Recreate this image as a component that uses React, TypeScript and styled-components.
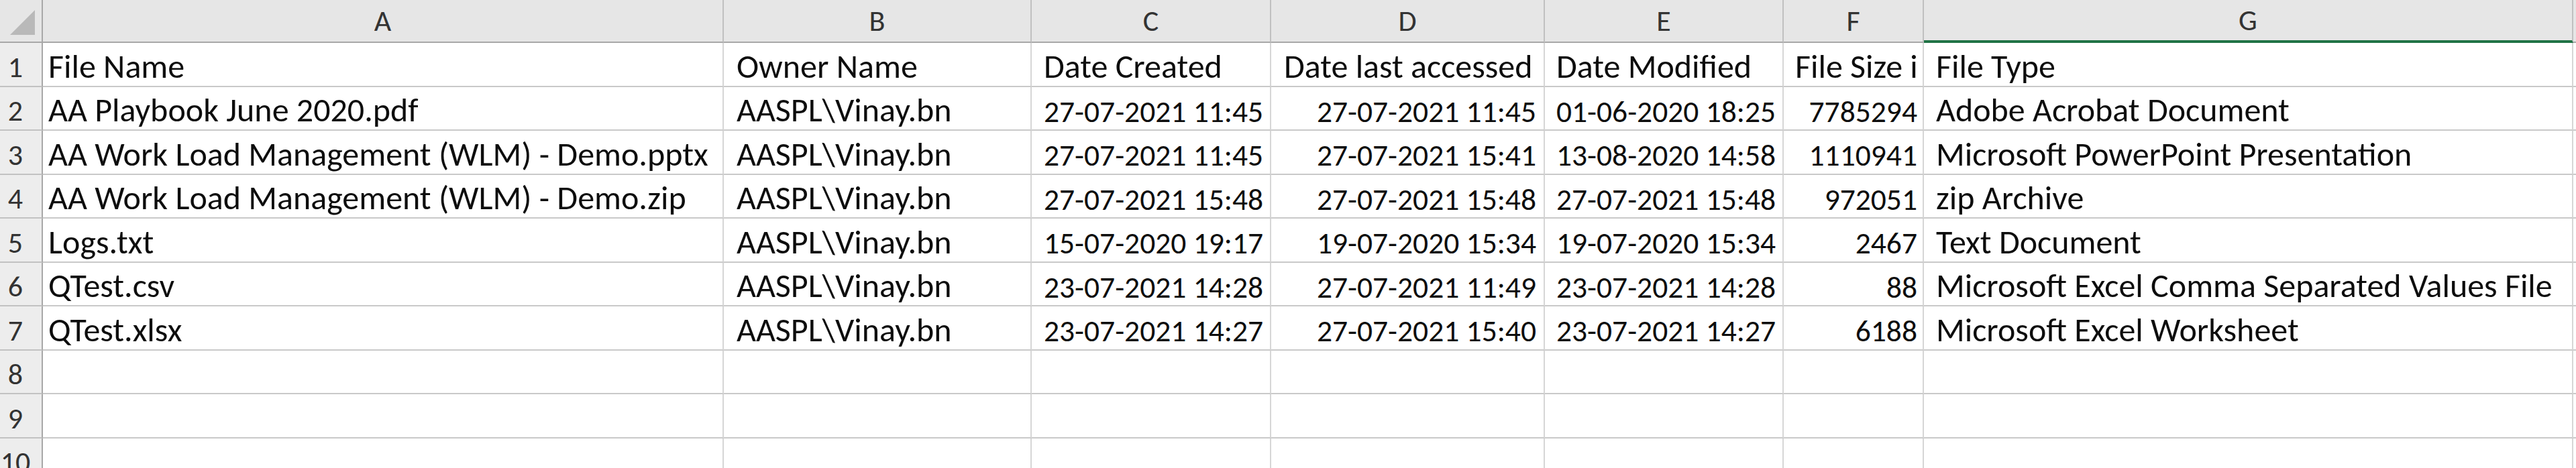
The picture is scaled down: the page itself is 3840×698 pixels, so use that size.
import React from 'react';
import styled, { createGlobalStyle, css } from 'styled-components';

const GlobalStyle = createGlobalStyle`
  html, body { margin: 0; padding: 0; background: #ffffff; overflow: hidden; }
  #root { width: 3840px; height: 698px; }
`;

type Align = 'left' | 'right';

interface ColumnDef {
  letter: string;
  align: Align;
  numeric: boolean;
  padLeft: number;
  padRight: number;
}

const COLUMNS: ColumnDef[] = [
  { letter: 'A', align: 'left', numeric: false, padLeft: 8, padRight: 10 },
  { letter: 'B', align: 'left', numeric: false, padLeft: 19, padRight: 10 },
  { letter: 'C', align: 'left', numeric: true, padLeft: 18, padRight: 8 },
  { letter: 'D', align: 'right', numeric: true, padLeft: 19, padRight: 11 },
  { letter: 'E', align: 'left', numeric: true, padLeft: 17, padRight: 8 },
  { letter: 'F', align: 'right', numeric: true, padLeft: 17, padRight: 8 },
  { letter: 'G', align: 'left', numeric: false, padLeft: 18, padRight: 10 },
  { letter: 'H', align: 'left', numeric: false, padLeft: 10, padRight: 10 },
];

const HEADER_ROW = [
  'File Name',
  'Owner Name',
  'Date Created',
  'Date last accessed',
  'Date Modified',
  'File Size i',
  'File Type',
  '',
];

const DATA: string[][] = [
  ['AA Playbook June 2020.pdf', 'AASPL\\Vinay.bn', '27-07-2021 11:45', '27-07-2021 11:45', '01-06-2020 18:25', '7785294', 'Adobe Acrobat Document', ''],
  ['AA Work Load Management (WLM) - Demo.pptx', 'AASPL\\Vinay.bn', '27-07-2021 11:45', '27-07-2021 15:41', '13-08-2020 14:58', '1110941', 'Microsoft PowerPoint Presentation', ''],
  ['AA Work Load Management (WLM) - Demo.zip', 'AASPL\\Vinay.bn', '27-07-2021 15:48', '27-07-2021 15:48', '27-07-2021 15:48', '972051', 'zip Archive', ''],
  ['Logs.txt', 'AASPL\\Vinay.bn', '15-07-2020 19:17', '19-07-2020 15:34', '19-07-2020 15:34', '2467', 'Text Document', ''],
  ['QTest.csv', 'AASPL\\Vinay.bn', '23-07-2021 14:28', '27-07-2021 11:49', '23-07-2021 14:28', '88', 'Microsoft Excel Comma Separated Values File', ''],
  ['QTest.xlsx', 'AASPL\\Vinay.bn', '23-07-2021 14:27', '27-07-2021 15:40', '23-07-2021 14:27', '6188', 'Microsoft Excel Worksheet', ''],
  ['', '', '', '', '', '', '', ''],
  ['', '', '', '', '', '', '', ''],
  ['', '', '', '', '', '', '', ''],
];

const Sheet = styled.div`
  display: grid;
  grid-template-columns: 64px 1015px 459px 357px 408px 356px 209px 968px 1fr;
  grid-template-rows: 64px repeat(10, 65.5px);
  width: 3840px;
  height: 698px;
  overflow: hidden;
  background: #ffffff;
  font-family: Carlito, Calibri, Lato, sans-serif;
`;

const Corner = styled.div`
  box-sizing: border-box;
  background: #e6e6e6;
  border-right: 2px solid #a8a8a8;
  border-bottom: 2px solid #a8a8a8;
  display: flex;
  justify-content: flex-end;
  align-items: flex-end;
  padding: 0 10px 10px 0;
`;

const CornerTriangle = styled.span`
  display: block;
  width: 37px;
  height: 37px;
  background: #b9b9b9;
  clip-path: polygon(100% 0, 100% 100%, 0 100%);
`;

const ColHeader = styled.div<{ $selected?: boolean }>`
  box-sizing: border-box;
  background: #e6e6e6;
  border-right: 2px solid #c0c0c0;
  border-bottom: 2px solid #a8a8a8;
  display: flex;
  align-items: center;
  justify-content: center;
  font-size: 44px;
  color: #333333;
  ${(p) =>
    p.$selected &&
    css`
      border-bottom: 4px solid #217346;
    `}
`;

const RowHeader = styled.div`
  box-sizing: border-box;
  background: #ededed;
  border-right: 2px solid #a8a8a8;
  border-bottom: 2px solid #c2c2c2;
  display: flex;
  align-items: flex-end;
  justify-content: center;
  padding: 0 16px 6px 0;
  font-size: 44px;
  line-height: 1;
  color: #333333;
`;

const Cell = styled.div<{ $align: Align; $numeric: boolean; $padLeft: number; $padRight: number }>`
  box-sizing: border-box;
  border-right: 2px solid #d6d6d6;
  border-bottom: 2px solid #c9c9c9;
  display: flex;
  align-items: flex-end;
  justify-content: ${(p) => (p.$align === 'right' ? 'flex-end' : 'flex-start')};
  padding: 0 ${(p) => p.$padRight}px 4px ${(p) => p.$padLeft}px;
  font-size: ${(p) => (p.$numeric ? 45.5 : 50)}px;
  line-height: 1;
  color: #0d0d0d;
  white-space: nowrap;
  overflow: hidden;
`;

export default function App() {
  const rows = [HEADER_ROW, ...DATA];
  return (
    <>
      <GlobalStyle />
      <Sheet>
        <Corner>
          <CornerTriangle />
        </Corner>
        {COLUMNS.map((c) => (
          <ColHeader key={c.letter} $selected={c.letter === 'G'}>
            {c.letter === 'H' ? '' : c.letter}
          </ColHeader>
        ))}
        {rows.map((row, r) => (
          <React.Fragment key={r}>
            <RowHeader>{r + 1}</RowHeader>
            {row.map((value, ci) => {
              const col = COLUMNS[ci];
              const isHeader = r === 0;
              return (
                <Cell
                  key={ci}
                  $align={isHeader ? 'left' : col.align}
                  $numeric={!isHeader && col.numeric}
                  $padLeft={col.padLeft}
                  $padRight={col.padRight}
                >
                  {value}
                </Cell>
              );
            })}
          </React.Fragment>
        ))}
      </Sheet>
    </>
  );
}
